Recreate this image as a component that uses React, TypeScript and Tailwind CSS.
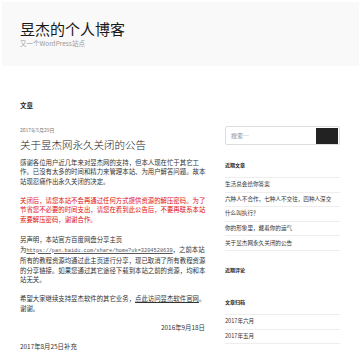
const recent = [
  '生活总会给你答案',
  '六种人不合作，七种人不交往，四种人深交',
  '什么叫执行？',
  '你的形象里，藏着你的运气',
  '关于昱杰网永久关闭的公告',
];

const archives = ['2017年六月', '2017年五月'];

export default function App() {
  return (
    <div className="h-[360px] w-[360px] overflow-hidden bg-white pt-[2px] font-['Noto_Sans_CJK_SC',sans-serif] text-[#333]">
      <header className="ml-[2px] mr-[1px] h-[64px] bg-[#f9f9f9] pl-[18px] pt-[18px]">
        <h1 className="text-[15px] leading-[18px] text-[#1a1a1a]">昱杰的个人博客</h1>
        <p className="mt-[1px] text-[6.5px] leading-[8px] text-[#999]">又一个WordPress站点</p>
      </header>

      <div className="px-[20px] pt-[35px]">
        <h2 className="text-[6.5px] font-bold leading-[8px] text-[#1a1a1a]">文章</h2>

        <div className="mt-[17px] flex">
          <main className="w-[188px] shrink-0">
            <div className="text-[5px] leading-[7px] text-[#777]">2017年5月29日</div>
            <h3 className="mt-[5px] text-[10.5px] font-light leading-[13px] text-[#1a1a1a]">
              关于昱杰网永久关闭的公告
            </h3>

            <div className="mt-[6.5px] text-[6.4px] leading-[9.5px]">
              <p>
                感谢各位用户近几年来对昱杰网的支持，但本人现在忙于其它工作。已没有太多的时间和精力来管理本站、为用户解答问题。故本站现忍痛作出永久关闭的决定。
              </p>
              <p className="mt-[9.5px] text-[#e01010]">
                关闭后，请您本站不会再通过任何方式提供资源的解压密码。为了节省您不必要的时间支出，请您在看到此公告后，不要再联系本站索要解压密码，谢谢合作。
              </p>
              <p className="mt-[11px]">
                另声明，本站官方百度网盘分享主页
                <span className="whitespace-nowrap">
                  为
                  <a className="font-['Liberation_Mono',monospace] text-[5.3px] text-[#555] underline">
                    https://pan.baidu.com/share/home?uk=3204528639
                  </a>
                  ，
                </span>
                之前本站所有的教程资源均通过此主页进行分享，现已取消了所有教程资源的分享链接。如果您通过其它途径下载到本站之前的资源，均和本站无关。
              </p>
              <p className="mt-[9.5px]">
                希望大家继续支持昱杰软件的其它业务，<a className="underline">点此访问昱杰软件官网</a>。谢谢。
              </p>
              <p className="mt-[10px] pr-[3px] text-right">2016年9月18日</p>
              <p className="mt-[9.5px]">2017年8月25日补充</p>
            </div>
          </main>

          <aside className="ml-[17px] w-[116px]">
            <div className="flex h-[19px] items-center rounded-[2px] border border-[#ddd] bg-white pl-[5px] pr-[1px]">
              <span className="flex-1 text-[6px] text-[#888]">搜索…</span>
              <div className="h-[16px] w-[22px] bg-[#222]" />
            </div>

            <h4 className="mt-[15.5px] text-[5px] font-bold leading-[7px] text-[#1a1a1a]">近期文章</h4>
            <ul className="mt-[9.5px] border-t border-[#eee] text-[5.6px] leading-[7px]">
              {recent.map((t) => (
                <li key={t} className="border-b border-[#eee] py-[3.3px]">
                  {t}
                </li>
              ))}
            </ul>

            <h4 className="mt-[15.5px] text-[5px] font-bold leading-[7px] text-[#1a1a1a]">近期评论</h4>

            <h4 className="mt-[25px] text-[5px] font-bold leading-[7px] text-[#1a1a1a]">文章归档</h4>
            <ul className="mt-[8.5px] border-t border-[#eee] text-[5.6px] leading-[7px]">
              {archives.map((t) => (
                <li key={t} className="border-b border-[#eee] py-[3.3px]">
                  {t}
                </li>
              ))}
            </ul>
          </aside>
        </div>
      </div>
    </div>
  );
}
